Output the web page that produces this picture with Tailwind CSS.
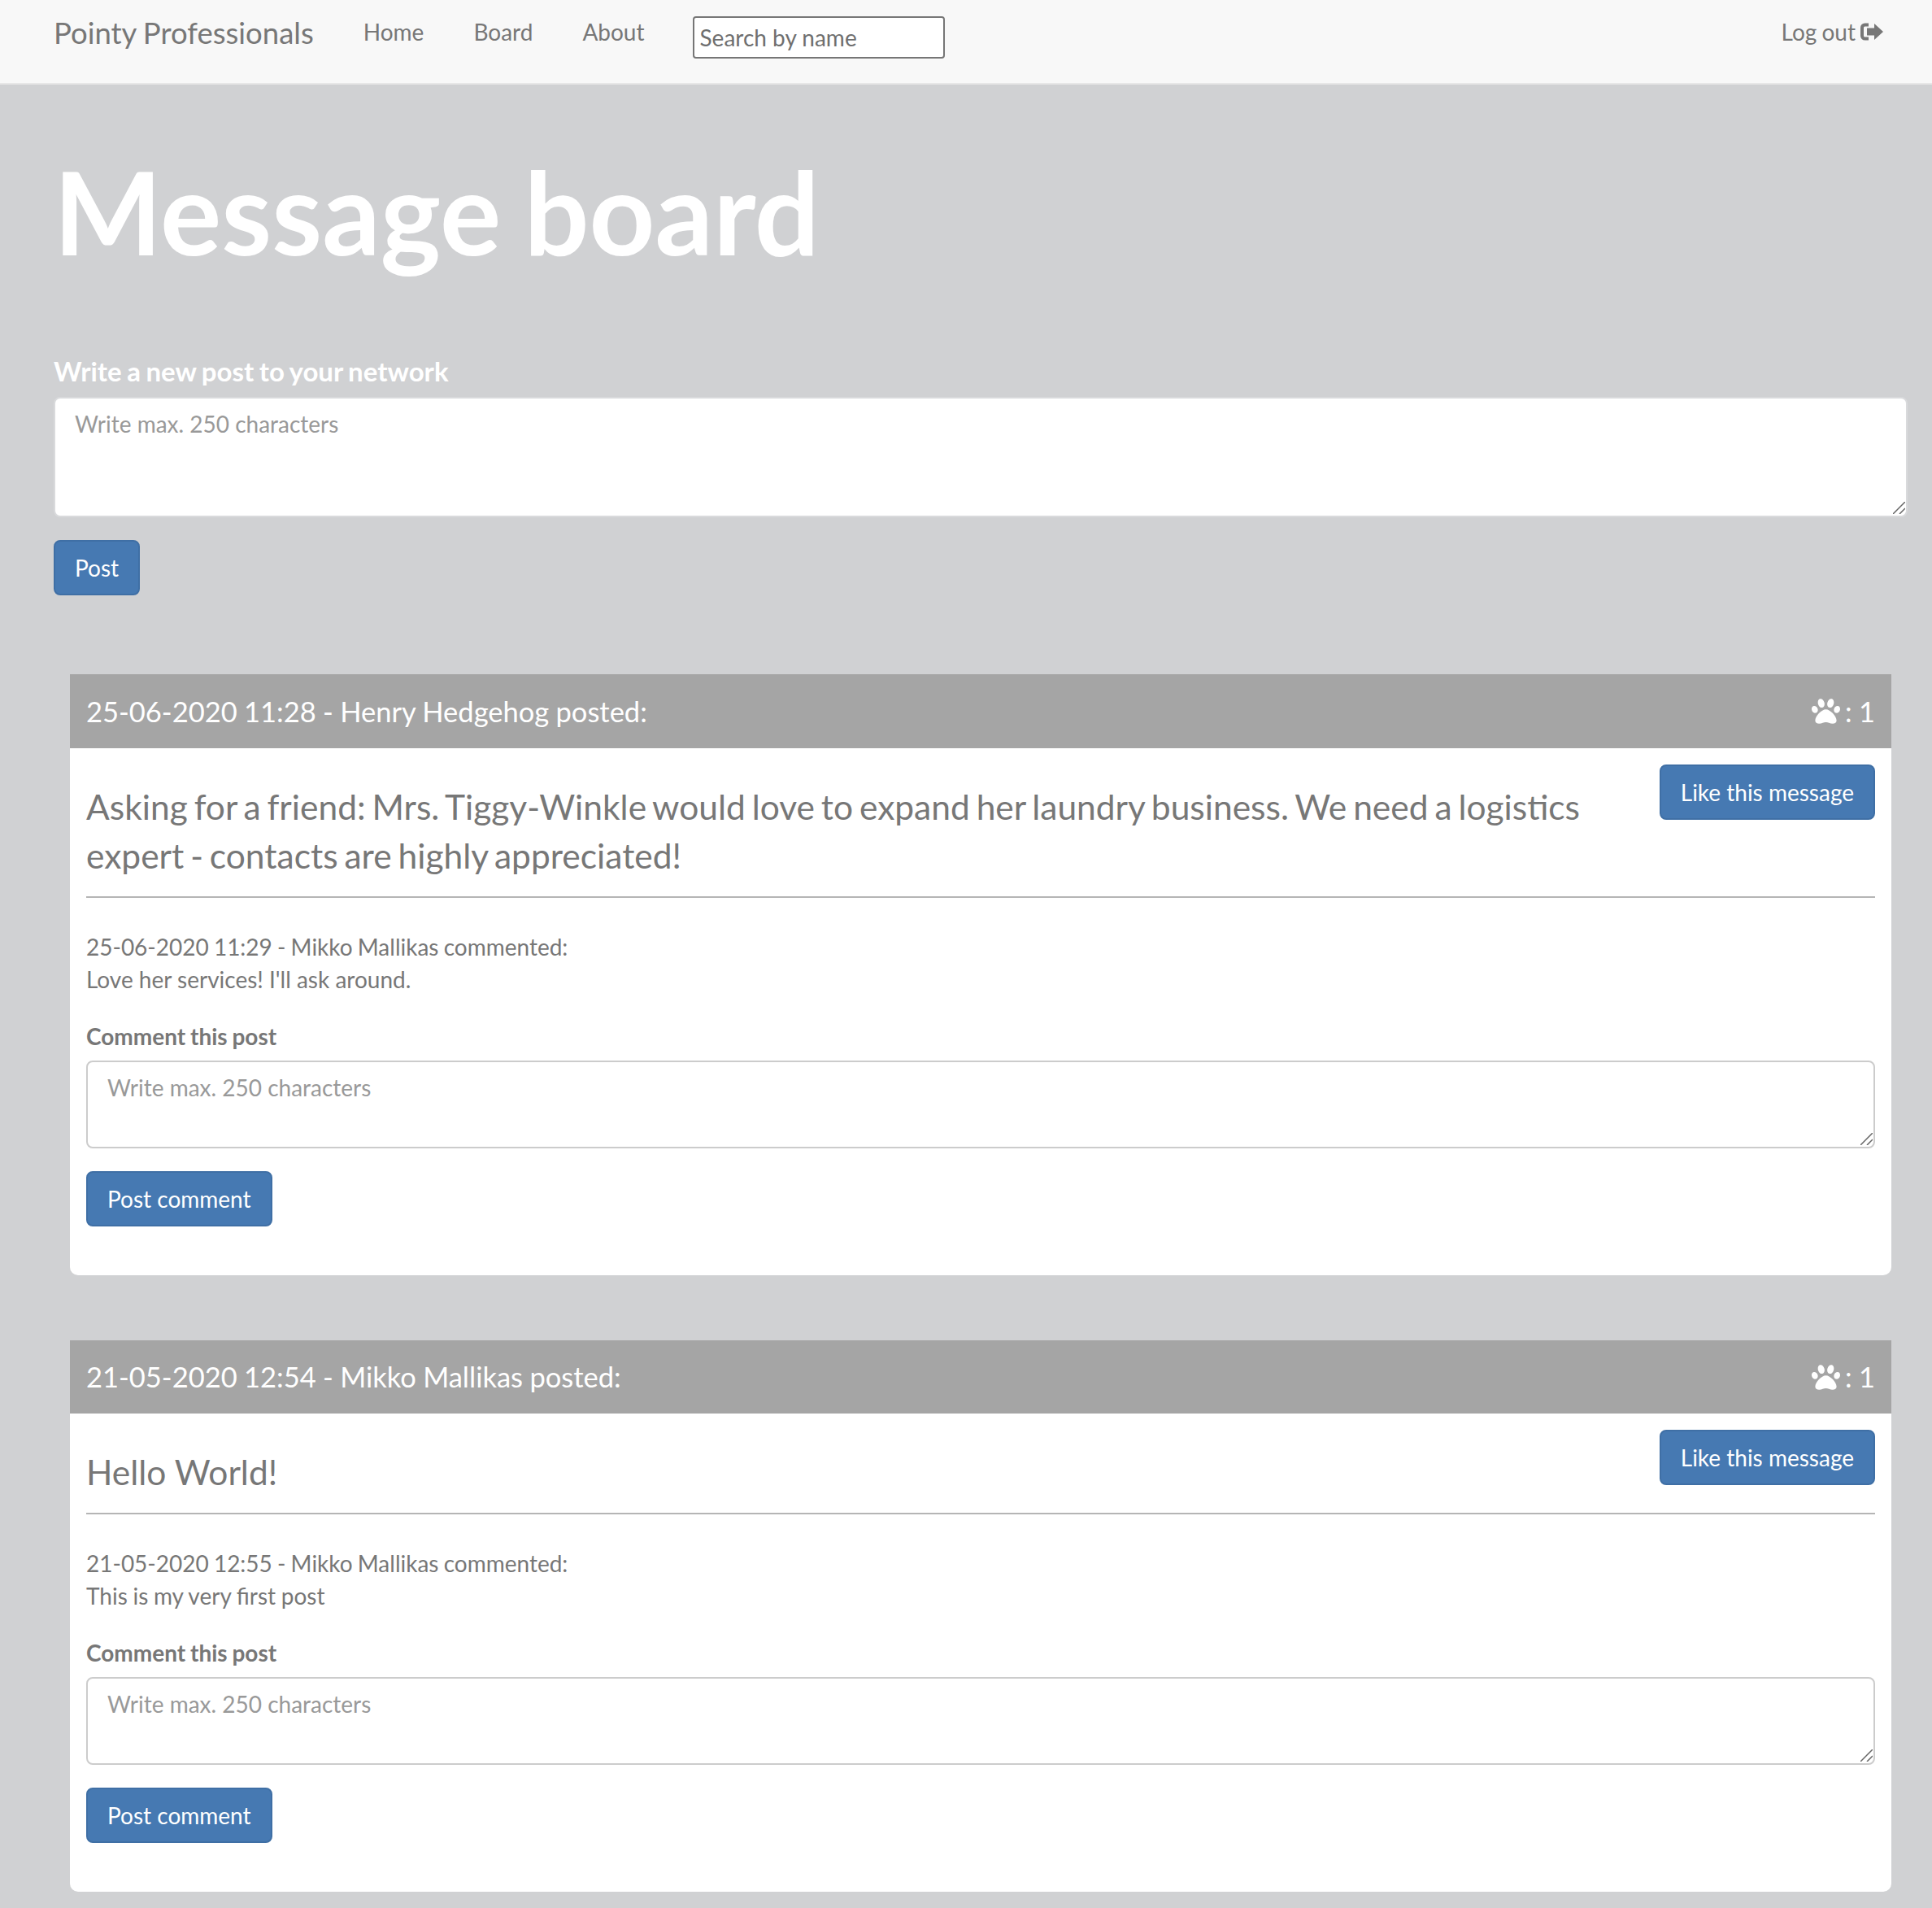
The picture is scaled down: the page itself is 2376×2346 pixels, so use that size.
<!DOCTYPE html>
<html lang="en">
<head>
    <meta charset="UTF-8">
    <title>Pointy Professionals</title>
    <script src="https://cdn.jsdelivr.net/npm/@tailwindcss/browser@4"></script>
</head>
<body class="min-h-screen bg-[#d0d1d3] font-['Lato',sans-serif] text-[28px] leading-[40px] text-[#777] [word-spacing:-1px]">
<!-- Navigation -->
<nav class="flex items-start h-[104px] pl-[66px] pr-[60px] bg-[#f8f8f8] border-b-2 border-[#e7e7e7]">
    <a href="#" class="text-[36.5px] leading-[80px]">Pointy Professionals</a>
    <div class="flex gap-[61px] ml-[61px] leading-[78px]">
        <a href="#">Home</a>
        <a href="#">Board</a>
        <a href="#">About</a>
    </div>
    <input type="text" placeholder="Search by name" class="w-[310px] h-[52px] ml-[59px] mt-[20px] px-[7px] bg-white border-2 border-[#767676] rounded-[4px] placeholder:text-[#6f6f6f]">
    <a href="#" class="flex items-center gap-[6px] ml-auto leading-[78px]">
        Log out
        <svg class="w-[28px] h-[22px]" viewBox="0 0 28 22" fill="#777"><path d="M10 2.5H5.5a3.5 3.5 0 0 0-3.5 3.5v10a3.5 3.5 0 0 0 3.5 3.5H10" fill="none" stroke="#777" stroke-width="4"/><path d="M8 6.5h9V1l11 10-11 10v-5.500H8z"/></svg>
    </a>
</nav>

<main class="pl-[66px] pr-[30px] pb-[20px]">
    <h1 class="pt-[66px] text-[141px] leading-[180px] font-bold text-white [word-spacing:-6px]">Message board</h1>

    <!-- New post -->
    <form class="mt-[86px]">
        <label class="block text-[33px] font-bold text-white [word-spacing:-1.5px]">Write a new post to your network</label>
        <div class="relative mt-[12px]">
            <textarea placeholder="Write max. 250 characters" class="block w-full h-[148px] px-[24px] py-[11px] bg-white border-2 border-[#d9dadc] rounded-[8px] resize-none placeholder:text-[#999]"></textarea>
            <svg class="absolute right-[3px] bottom-[4px] w-[15px] h-[15px]" viewBox="0 0 15 15" stroke="#666" stroke-width="1.500"><path d="M0 15 15 0M8 15l7-7"/></svg>
        </div>
        <button type="button" class="h-[68px] mt-[28px] px-[24px] bg-[#4679b2] border-2 border-[#3f6fa5] rounded-[8px] text-white">Post</button>
    </form>

    <div class="flex flex-col gap-[80px] mt-[97px] mx-[20px]">
        <!-- Post 1 -->
        <article class="bg-white rounded-b-[10px] overflow-hidden">
            <header class="flex items-center justify-between h-[91px] px-[20px] bg-[#a5a5a5] text-white text-[34.5px] [word-spacing:-0.5px]">
                <span>25-06-2020 11:28 - Henry Hedgehog posted:</span>
                <span class="flex items-center gap-[6px]">
                    <svg class="w-[35px] h-[35px]" viewBox="0 0 512 512" fill="#fff"><path d="M256 224c-79.41 0-192 122.76-192 200.25 0 34.9 26.81 55.75 71.74 55.75 48.84 0 81.09-25.08 120.26-25.08 39.51 0 71.85 25.08 120.26 25.08 44.93 0 71.74-20.85 71.74-55.75C448 346.76 335.41 224 256 224zm-147.28-12.61c-10.4-34.65-42.44-57.09-71.56-50.13-29.12 6.96-44.29 40.69-33.89 75.34 10.4 34.65 42.44 57.09 71.56 50.13 29.12-6.96 44.29-40.69 33.89-75.34zm84.72-20.78c30.94-8.14 46.42-49.94 34.58-93.36s-46.52-72.01-77.46-63.87-46.42 49.94-34.58 93.36c11.84 43.42 46.52 72.02 77.46 63.87zm281.39-29.34c-29.12-6.96-61.15 15.48-71.56 50.13-10.4 34.65 4.77 68.38 33.89 75.34 29.12 6.96 61.15-15.48 71.56-50.13 10.4-34.65-4.77-68.38-33.89-75.34zm-156.27 29.34c30.94 8.14 65.62-20.45 77.46-63.87 11.84-43.42-3.64-85.21-34.58-93.36s-65.62 20.45-77.46 63.87c-11.84 43.42 3.64 85.22 34.58 93.36z"/></svg>
                    <span>: 1</span>
                </span>
            </header>
            <div class="px-[20px] pt-[20px] pb-[60px]">
                <button type="button" class="float-right h-[68px] ml-[60px] px-[24px] bg-[#4679b2] border-2 border-[#3f6fa5] rounded-[8px] text-white">Like this message</button>
                <p class="pt-[22px] text-[42.5px] leading-[60px] [word-spacing:-3px]">Asking for a friend: Mrs. Tiggy-Winkle would love to expand her laundry business. We need a logistics expert - contacts are highly appreciated!</p>
                <hr class="mt-[20px] border-t-2 border-[#b5b5b5]">
                <p class="mt-[40px]">25-06-2020 11:29 - Mikko Mallikas commented:<br><span class="[word-spacing:0px]">Love her services! I'll ask around.</span></p>
                <label class="block mt-[30px] font-bold">Comment this post</label>
                <div class="relative mt-[10px]">
                    <textarea placeholder="Write max. 250 characters" class="block w-full h-[108px] px-[24px] py-[11px] bg-white border-2 border-[#ccc] rounded-[8px] resize-none placeholder:text-[#999]"></textarea>
                    <svg class="absolute right-[3px] bottom-[4px] w-[15px] h-[15px]" viewBox="0 0 15 15" stroke="#666" stroke-width="1.500"><path d="M0 15 15 0M8 15l7-7"/></svg>
                </div>
                <button type="button" class="h-[68px] mt-[28px] px-[24px] bg-[#4679b2] border-2 border-[#3f6fa5] rounded-[8px] text-white">Post comment</button>
            </div>
        </article>

        <!-- Post 2 -->
        <article class="bg-white rounded-b-[10px] overflow-hidden">
            <header class="flex items-center justify-between h-[90px] px-[20px] bg-[#a5a5a5] text-white text-[34.5px] [word-spacing:-0.5px]">
                <span>21-05-2020 12:54 - Mikko Mallikas posted:</span>
                <span class="flex items-center gap-[6px]">
                    <svg class="w-[35px] h-[35px]" viewBox="0 0 512 512" fill="#fff"><path d="M256 224c-79.41 0-192 122.76-192 200.25 0 34.9 26.81 55.75 71.74 55.75 48.84 0 81.09-25.08 120.26-25.08 39.51 0 71.85 25.08 120.26 25.08 44.93 0 71.74-20.85 71.74-55.75C448 346.76 335.41 224 256 224zm-147.28-12.61c-10.4-34.65-42.44-57.09-71.56-50.13-29.12 6.96-44.29 40.69-33.89 75.34 10.4 34.65 42.44 57.09 71.56 50.13 29.12-6.96 44.29-40.69 33.89-75.34zm84.72-20.78c30.94-8.14 46.42-49.94 34.58-93.36s-46.52-72.01-77.46-63.87-46.42 49.94-34.58 93.36c11.84 43.42 46.52 72.02 77.46 63.87zm281.39-29.34c-29.12-6.96-61.15 15.48-71.56 50.13-10.4 34.65 4.77 68.38 33.89 75.34 29.12 6.96 61.15-15.48 71.56-50.13 10.4-34.65-4.77-68.38-33.89-75.34zm-156.27 29.34c30.94 8.14 65.62-20.45 77.46-63.87 11.84-43.42-3.64-85.21-34.58-93.36s-65.62 20.45-77.46 63.87c-11.84 43.42 3.64 85.22 34.58 93.36z"/></svg>
                    <span>: 1</span>
                </span>
            </header>
            <div class="px-[20px] pt-[20px] pb-[60px]">
                <button type="button" class="float-right h-[68px] ml-[60px] px-[24px] bg-[#4679b2] border-2 border-[#3f6fa5] rounded-[8px] text-white">Like this message</button>
                <p class="pt-[22px] text-[42.5px] leading-[60px] [word-spacing:0px]">Hello World!</p>
                <hr class="mt-[20px] border-t-2 border-[#b5b5b5]">
                <p class="mt-[40px]">21-05-2020 12:55 - Mikko Mallikas commented:<br><span class="[word-spacing:-0.5px]">This is my very first post</span></p>
                <label class="block mt-[30px] font-bold">Comment this post</label>
                <div class="relative mt-[10px]">
                    <textarea placeholder="Write max. 250 characters" class="block w-full h-[108px] px-[24px] py-[11px] bg-white border-2 border-[#ccc] rounded-[8px] resize-none placeholder:text-[#999]"></textarea>
                    <svg class="absolute right-[3px] bottom-[4px] w-[15px] h-[15px]" viewBox="0 0 15 15" stroke="#666" stroke-width="1.500"><path d="M0 15 15 0M8 15l7-7"/></svg>
                </div>
                <button type="button" class="h-[68px] mt-[28px] px-[24px] bg-[#4679b2] border-2 border-[#3f6fa5] rounded-[8px] text-white">Post comment</button>
            </div>
        </article>
    </div>
</main>
</body>
</html>
